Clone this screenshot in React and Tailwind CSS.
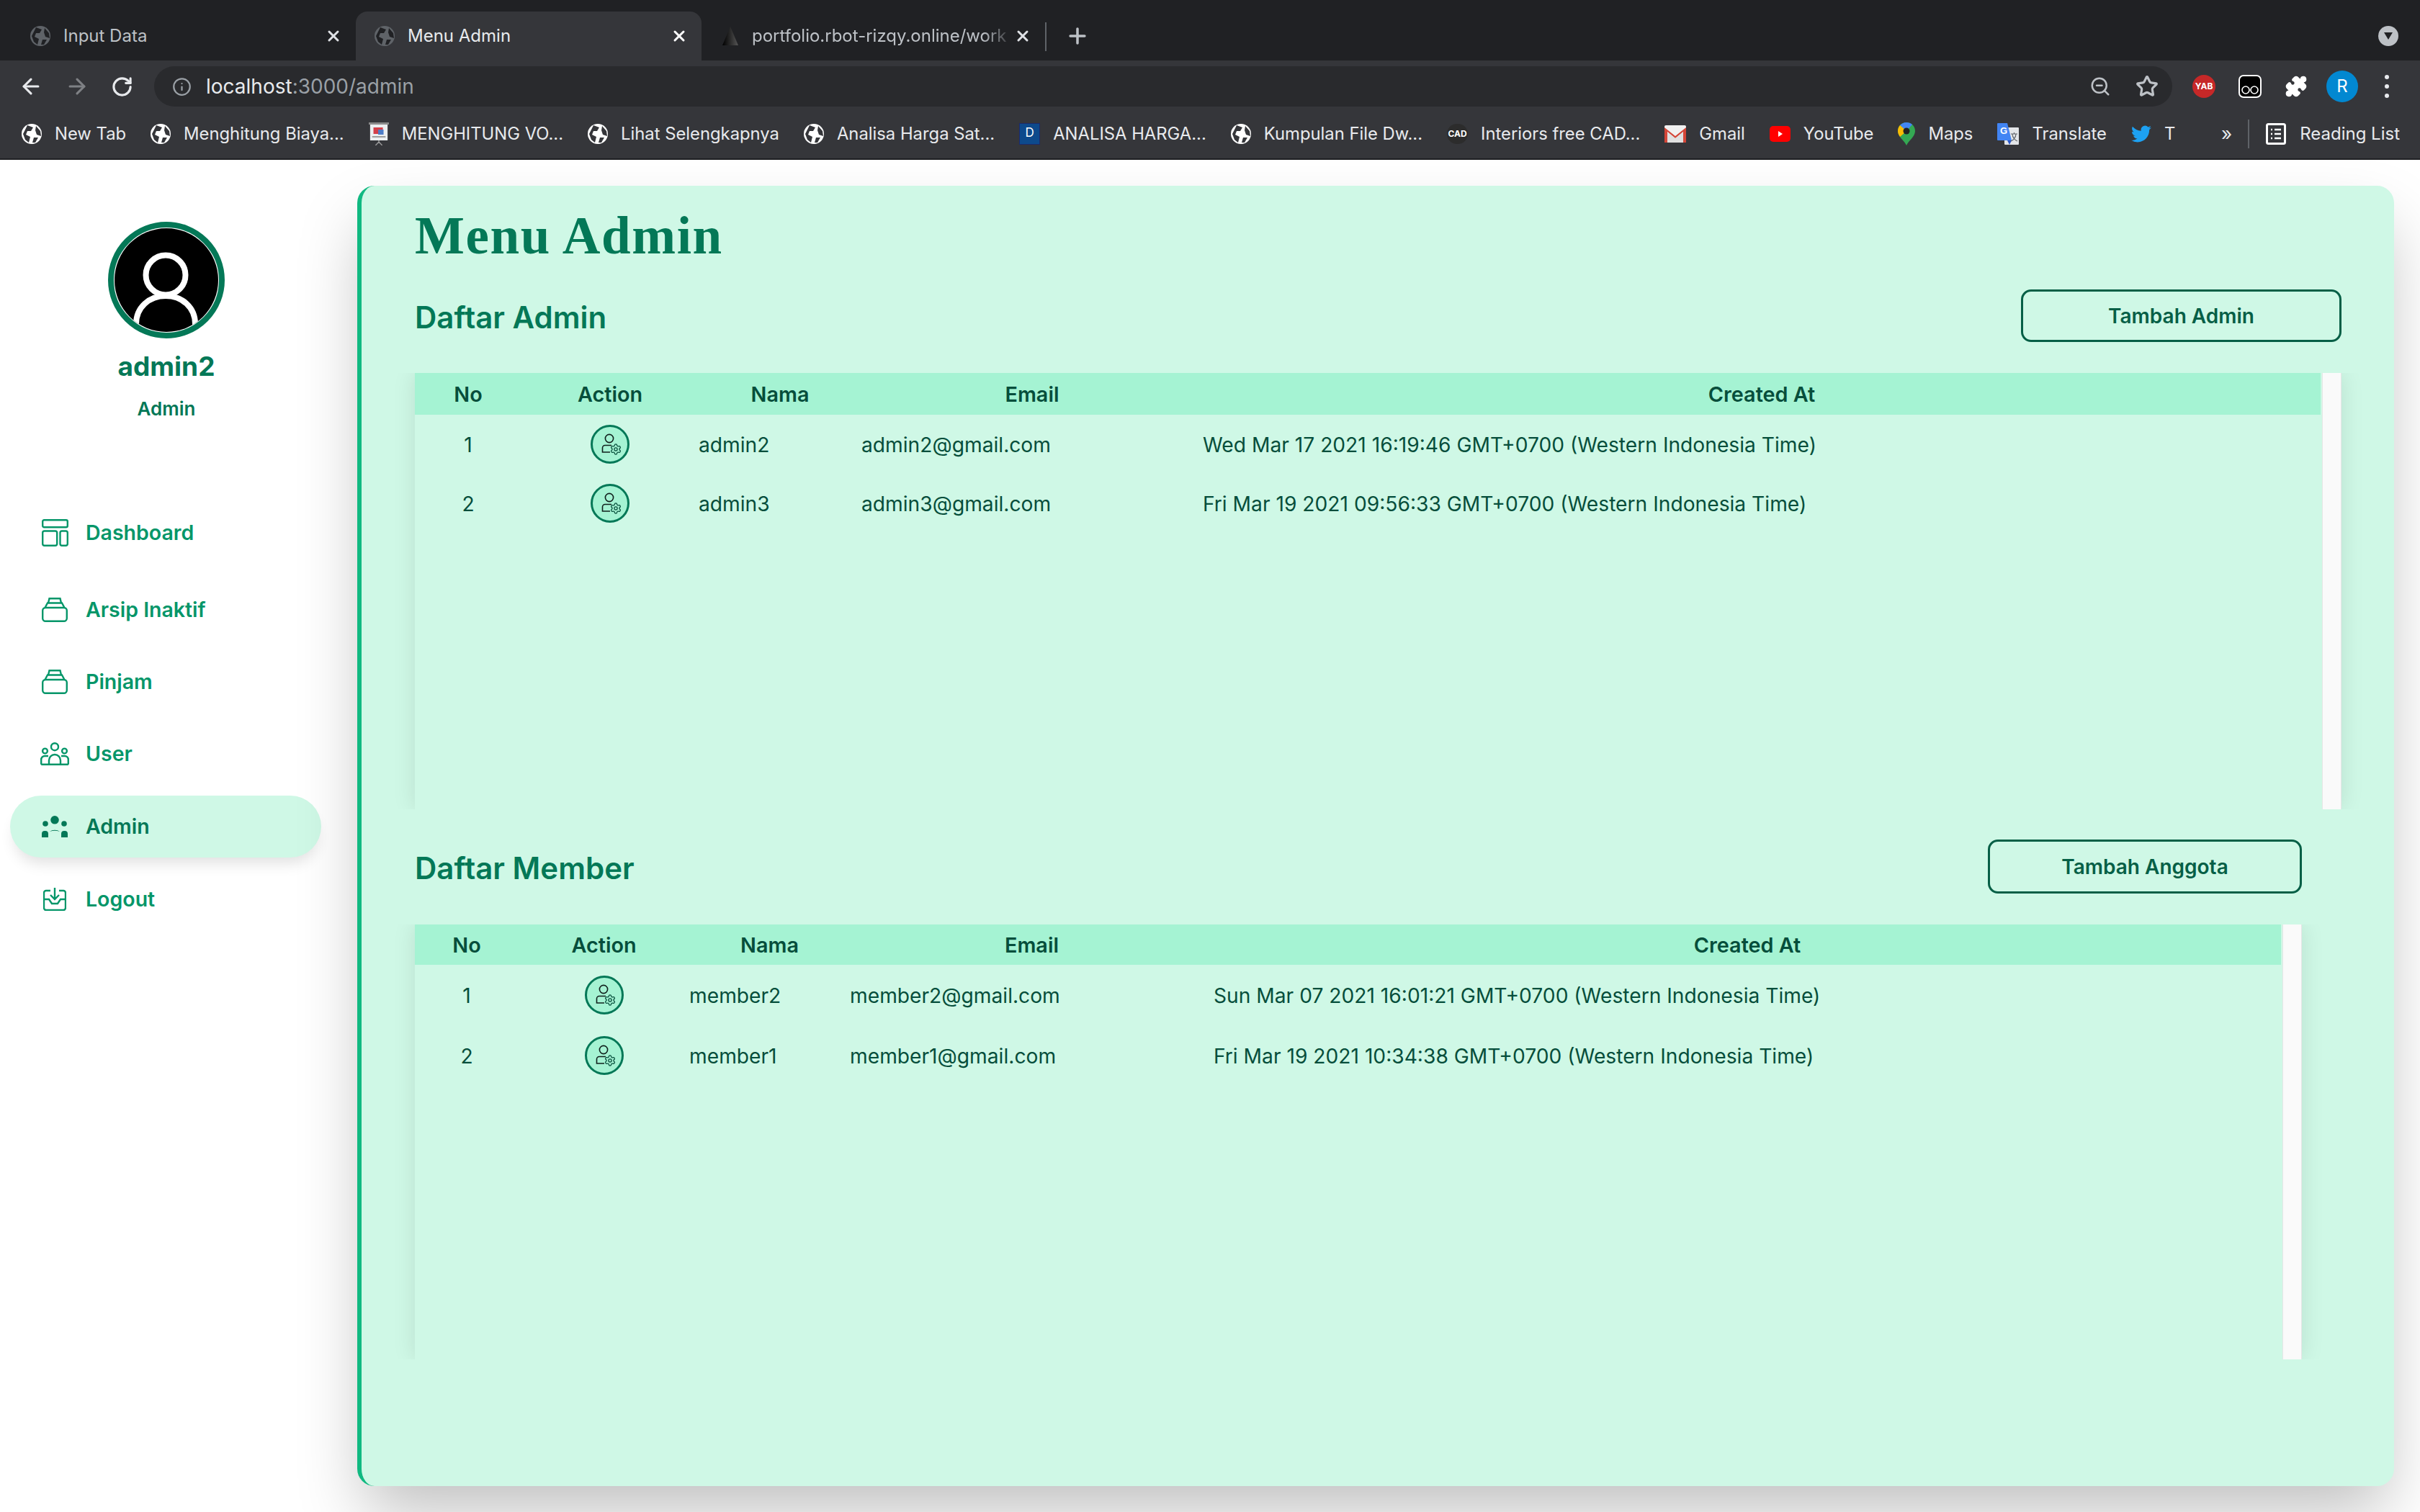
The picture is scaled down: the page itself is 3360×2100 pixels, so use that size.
import { ArrowLeft, ArrowRight, RotateCw, Info, ZoomOut, Star, X, Plus, Settings, Puzzle } from 'lucide-react'

const sans = "font-['Inter','Liberation_Sans',sans-serif]"

function Globe({ dim }) {
  const land = dim ? '#202124' : '#35363a'
  return (
    <svg width="28" height="28" viewBox="0 0 28 28" className="shrink-0">
      <circle cx="14" cy="14" r="14" fill={dim ? '#5f6368' : '#ffffff'} />
      <path d="M8 2 L16 5 L13 10 L8 10 L6 15 L12 18 L10 26 L5 22 L2 14 Z M20 3 L26 10 L27 17 L21 15 L19 9 Z M17 19 L23 19 L19 26 L15 26 Z" fill={land} />
    </svg>
  )
}

function Tab({ width, pad, title, active, faded, icon }) {
  return (
    <div className={`relative flex h-[68px] shrink-0 items-center ${width} ${active ? 'rounded-t-[16px] bg-[#35363a]' : ''}`}>
      <div className={`flex w-full items-center pr-[19px] ${pad}`}>
        {icon}
        <span className={`ml-[18px] min-w-0 flex-1 overflow-hidden whitespace-nowrap text-[24px] ${active ? 'text-[#e8eaed]' : 'text-[#bdc1c6]'} ${faded ? '[mask-image:linear-gradient(90deg,#000_88%,transparent)]' : ''}`}>{title}</span>
        <X size={24} strokeWidth={3} className={active ? 'shrink-0 text-white' : 'shrink-0 text-[#dfe1e5]'} />
      </div>
    </div>
  )
}

function Triangle() {
  return (
    <svg width="24" height="30" viewBox="0 0 24 30" className="shrink-0">
      <defs>
        <linearGradient id="tri" x1="0" x2="1">
          <stop offset="0" stopColor="#000" />
          <stop offset="1" stopColor="#555" />
        </linearGradient>
      </defs>
      <path d="M12 2 L23 28 H1 Z" fill="url(#tri)" />
    </svg>
  )
}

const bookmarks = [
  { label: 'New Tab', icon: <Globe /> },
  { label: 'Menghitung Biaya...', icon: <Globe /> },
  { label: 'MENGHITUNG VO...', icon: <Poster /> },
  { label: 'Lihat Selengkapnya', icon: <Globe /> },
  { label: 'Analisa Harga Sat...', icon: <Globe /> },
  { label: 'ANALISA HARGA...', icon: <DBox /> },
  { label: 'Kumpulan File Dw...', icon: <Globe /> },
  { label: 'Interiors free CAD...', icon: <CadMark /> },
  { label: 'Gmail', icon: <Gmail /> },
  { label: 'YouTube', icon: <YouTube /> },
  { label: 'Maps', icon: <Maps /> },
  { label: 'Translate', icon: <Translate /> },
  { label: 'T', icon: <Twitter /> },
]

function Poster() {
  return (
    <svg width="28" height="32" viewBox="0 0 30 32" className="shrink-0" preserveAspectRatio="none">
      <rect x="0" y="0" width="30" height="3" fill="#8a8a8a" />
      <rect x="2" y="3" width="26" height="22" fill="#eceff1" />
      <rect x="7" y="7" width="14" height="9" fill="#d33f49" />
      <rect x="14" y="10" width="8" height="7" fill="#4d7cc7" />
      <rect x="5" y="19" width="20" height="2" fill="#9e9e9e" />
      <path d="M15 25 L15 29 M15 27 L10 32 M15 27 L20 32" stroke="#999" strokeWidth="1.5" />
    </svg>
  )
}

function DBox() {
  return (
    <div className="flex h-[30px] w-[29px] shrink-0 items-start justify-center border border-[#1b2a6b] bg-[#0d4a8c] text-[17px] leading-[24px] text-white">D</div>
  )
}

function CadMark() {
  return (
    <div className="flex h-[28px] w-[29px] shrink-0 items-center justify-center rounded-full bg-[#2c2c2c] text-[12px] font-bold leading-none text-white">CAD</div>
  )
}

function Gmail() {
  return (
    <svg width="30" height="24" viewBox="0 0 30 24" className="shrink-0">
      <rect width="30" height="24" rx="2" fill="#f1f1f1" />
      <path d="M0 3 L15 15 L30 3 V24 H26 V9 L15 18 L4 9 V24 H0 Z" fill="#d44638" />
      <path d="M4 9 L15 18 L26 9 V24 H4 Z" fill="#e0e0e0" />
    </svg>
  )
}

function YouTube() {
  return (
    <svg width="29" height="22" viewBox="0 0 29 22" className="shrink-0">
      <rect width="29" height="22" rx="5" fill="#ff0000" />
      <path d="M12 7 L18 11 L12 15 Z" fill="#fff" />
    </svg>
  )
}

function Maps() {
  return (
    <svg width="24" height="32" viewBox="0 0 24 32" className="shrink-0">
      <path d="M12 0 C5 0 0 5 0 12 C0 20 9 25 12 32 C15 25 24 20 24 12 C24 5 19 0 12 0 Z" fill="#34a853" />
      <path d="M12 0 C8 0 5 2 3 4 L12 12 L20 3 C18 1 15 0 12 0 Z" fill="#4285f4" />
      <path d="M0 12 C0 15 1 17 3 20 L12 12 L3 4 C1 6 0 9 0 12 Z" fill="#fbbc04" />
      <circle cx="12" cy="12" r="4.5" fill="#222" />
    </svg>
  )
}

function Translate() {
  return (
    <svg width="30" height="30" viewBox="0 0 30 30" className="shrink-0">
      <rect x="10" y="6" width="20" height="24" rx="1" fill="#e3e5e8" />
      <path d="M0 1 a1 1 0 0 1 1 -1 H14 L20 24 H1 a1 1 0 0 1 -1 -1 Z" fill="#4285f4" />
      <path d="M14 24 L20 24 L17 30 Z" fill="#2a56c6" />
      <text x="4" y="15" fontSize="13" fontWeight="700" fill="#fff" fontFamily="Liberation Sans">G</text>
      <path d="M19 15 H28 M23.5 13 V15 M21 15 C21 20 25 24 28 25 M26 15 C26 20 22 24 19 25" stroke="#5f6368" strokeWidth="1.2" fill="none" />
    </svg>
  )
}

function Twitter() {
  return (
    <svg width="28" height="28" viewBox="0 0 24 24" className="shrink-0">
      <path fill="#1da1f2" d="M23.95 4.57a10 10 0 0 1-2.82.77 4.96 4.96 0 0 0 2.16-2.72c-.95.55-2 .95-3.12 1.18a4.92 4.92 0 0 0-8.38 4.48C7.69 8.1 4.07 6.13 1.64 3.16a4.82 4.82 0 0 0-.67 2.48c0 1.71.87 3.21 2.19 4.1a4.9 4.9 0 0 1-2.23-.62v.06a4.92 4.92 0 0 0 3.95 4.83 4.9 4.9 0 0 1-2.21.08 4.93 4.93 0 0 0 4.6 3.42A9.87 9.87 0 0 1 0 19.54a13.94 13.94 0 0 0 7.55 2.21c9.05 0 14-7.5 14-13.98 0-.21 0-.42-.02-.63a9.94 9.94 0 0 0 2.46-2.55z" />
    </svg>
  )
}

function BrowserChrome() {
  return (
    <div className={`shrink-0 ${sans}`}>
      <div className="flex h-[84px] items-end bg-[#202124] pr-[30px]">
        <Tab width="w-[494px]" pad="pl-[42px]" title="Input Data" icon={<Globe dim />} />
        <Tab width="w-[480px]" pad="pl-[26px]" title="Menu Admin" active icon={<Globe dim />} />
        <Tab width="w-[477px]" pad="pl-[28px]" title="portfolio.rbot-rizqy.online/work" faded icon={<Triangle />} />
        <div className="mb-[13px] h-[40px] w-[2px] bg-[#5f6368]" />
        <Plus size={34} strokeWidth={2.5} className="mb-[17px] ml-[26px] text-[#bdc1c6]" />
        <div className="mb-[20px] ml-auto flex h-[28px] w-[28px] items-center justify-center rounded-full bg-[#bdc1c6]">
          <svg width="12" height="10" viewBox="0 0 12 10"><path d="M0 0 H12 L6 10 Z" fill="#202124" /></svg>
        </div>
      </div>
      <div className="flex h-[64px] items-start bg-[#35363a] pt-[8px]">
        <div className="flex h-[56px] w-[214px] items-center gap-[30px] pl-[26px]">
          <ArrowLeft size={34} strokeWidth={2.2} className="text-[#e8eaed]" />
          <ArrowRight size={34} strokeWidth={2.2} className="text-[#7f8185]" />
          <RotateCw size={31} strokeWidth={2.4} className="text-[#e8eaed]" />
        </div>
        <div className="flex h-[56px] w-[802px] flex-1 items-center rounded-full bg-[#292a2d] pl-[25px] pr-[19px]">
          <Info size={27} strokeWidth={2} className="text-[#9aa0a6]" />
          <span className="ml-[20px] text-[28px] leading-none text-[#e8eaed]">localhost<span className="text-[#9aa0a6]">:3000/admin</span></span>
          <ZoomOut size={30} strokeWidth={2} className="ml-auto text-[#bdc1c6]" />
          <Star size={32} strokeWidth={2.4} className="ml-[34px] text-[#bdc1c6]" />
        </div>
        <div className="flex h-[56px] w-[344px] shrink-0 items-center pl-[28px]">
          <div className="flex h-[32px] w-[32px] items-center justify-center rounded-full bg-[#c62828] text-[12px] font-bold leading-none text-white">YAB</div>
          <svg width="32" height="32" viewBox="0 0 32 32" className="ml-[32px]">
            <rect x="1" y="1" width="30" height="30" rx="6" fill="#000" stroke="#fff" strokeWidth="2" />
            <circle cx="10" cy="21" r="5" fill="none" stroke="#fff" strokeWidth="1.6" />
            <circle cx="22" cy="21" r="5" fill="none" stroke="#fff" strokeWidth="1.6" />
          </svg>
          <Puzzle size={32} fill="#ffffff" strokeWidth={1.5} className="ml-[32px] text-white" />
          <div className="ml-[26px] flex h-[44px] w-[44px] items-center justify-center rounded-full bg-[#0288d1] text-[24px] text-white">R</div>
          <div className="ml-[37px] flex flex-col gap-[7px]">
            <div className="h-[6px] w-[6px] rounded-full bg-[#e8eaed]" />
            <div className="h-[6px] w-[6px] rounded-full bg-[#e8eaed]" />
            <div className="h-[6px] w-[6px] rounded-full bg-[#e8eaed]" />
          </div>
        </div>
      </div>
      <div className="flex h-[74px] items-center border-b-2 border-[#202124] bg-[#35363a] pl-[30px] pr-[28px] pt-[4px]">
        <div className="flex items-center gap-[34px]">
          {bookmarks.map((b) => (
            <div key={b.label} className="flex items-center gap-[18px]">
              {b.icon}
              <span className="whitespace-nowrap text-[23.8px] leading-none text-[#e8eaed]">{b.label}</span>
            </div>
          ))}
        </div>
        <span className="ml-auto text-[26px] leading-none text-[#e8eaed]">»</span>
        <div className="ml-[22px] h-[40px] w-[2px] bg-[#5f6368]" />
        <svg width="28" height="30" viewBox="0 0 28 30" className="ml-[23px]">
          <rect x="1.5" y="1.5" width="25" height="27" rx="2" fill="none" stroke="#fff" strokeWidth="3" />
          <path d="M7 9 H9 M12 9 H21 M7 15 H9 M12 15 H21 M7 21 H9 M12 21 H21" stroke="#fff" strokeWidth="2.5" />
        </svg>
        <span className="ml-[19px] whitespace-nowrap text-[24px] leading-none text-[#e8eaed]">Reading List</span>
      </div>
    </div>
  )
}

function IconDashboard() {
  return (
    <svg width="37" height="38" viewBox="0 0 37 38" fill="none" stroke="currentColor" strokeWidth="2.4">
      <rect x="1.2" y="1.2" width="34.6" height="10" rx="2" />
      <rect x="1.2" y="16.5" width="20" height="20.3" rx="2.5" />
      <rect x="25.5" y="16.5" width="10.3" height="20.3" rx="2.5" />
    </svg>
  )
}

function IconArchive() {
  return (
    <svg width="36" height="34" viewBox="0 0 36 34" fill="none" stroke="currentColor" strokeWidth="2.4">
      <rect x="1.2" y="14" width="33.6" height="18.8" rx="4" />
      <path d="M4.5 14 L8 7.5 H28 L31.5 14" />
      <path d="M9 7.5 L10.5 1.2 H25.5 L27 7.5" />
    </svg>
  )
}

function IconUsers() {
  return (
    <svg width="40" height="32" viewBox="0 0 40 32" fill="none" stroke="currentColor" strokeWidth="2.4">
      <circle cx="20" cy="6.2" r="5" />
      <circle cx="6.5" cy="12" r="3.4" />
      <circle cx="33.5" cy="12" r="3.4" />
      <path d="M1.2 30.8 V24 a5 5 0 0 1 5 -5 H11 M38.8 30.8 V24 a5 5 0 0 0 -5 -5 H29" />
      <path d="M12 30.8 V25 a8 8 0 0 1 16 0 V30.8" />
      <path d="M1.2 30.8 H38.8" />
    </svg>
  )
}

function IconAdmin() {
  return (
    <svg width="36" height="30" viewBox="0 0 36 30" fill="currentColor">
      <circle cx="18" cy="5.8" r="5.8" />
      <circle cx="5" cy="11" r="3.8" />
      <circle cx="31" cy="11" r="3.8" />
      <path d="M0 30 V25 a4 4 0 0 1 4 -4 H5 a4 4 0 0 1 4 4 V30 Z M27 30 V25 a4 4 0 0 1 4 -4 H32 a4 4 0 0 1 4 4 V30 Z" />
      <path d="M11 22 a9 6 0 0 1 14 0 q-7 -2.4 -14 0 Z" />
    </svg>
  )
}

function IconLogout() {
  return (
    <svg width="32" height="32" viewBox="0 0 32 32" fill="none" stroke="currentColor" strokeWidth="2.4">
      <path d="M10 4 H4 a3 3 0 0 0 -3 3 V28 a3 3 0 0 0 3 3 H28 a3 3 0 0 0 3 -3 V7 a3 3 0 0 0 -3 -3 H22" />
      <path d="M16 0 V15 M10 10 L16 16 L22 10" />
      <path d="M1 16 H8 L12 22 H20 L24 16 H31" />
    </svg>
  )
}

const navItems = [
  { label: 'Dashboard', icon: <IconDashboard />, gap: 'mt-[0px]' },
  { label: 'Arsip Inaktif', icon: <IconArchive />, gap: 'mt-[21px]' },
  { label: 'Pinjam', icon: <IconArchive />, gap: 'mt-[14px]' },
  { label: 'User', icon: <IconUsers />, gap: 'mt-[14px]' },
  { label: 'Admin', icon: <IconAdmin />, gap: 'mt-[15px]', active: true },
  { label: 'Logout', icon: <IconLogout />, gap: 'mt-[15px]' },
]

function Sidebar() {
  return (
    <aside className="flex w-[496px] shrink-0 flex-col">
      <div className="flex w-[462px] flex-col items-center pt-[86px]">
        <div className="h-[162px] w-[162px] overflow-hidden rounded-full border-[8px] border-[#047857] bg-white p-[1px]">
          <svg viewBox="0 0 144 144" className="h-full w-full">
            <circle cx="72" cy="72" r="72" fill="#000" />
            <clipPath id="avatar"><circle cx="72" cy="72" r="72" /></clipPath>
            <g clipPath="url(#avatar)" fill="none" stroke="#fff" strokeWidth="8">
              <circle cx="71" cy="65" r="27.5" />
              <path d="M30 150 V133 C30 110 48 94 71 94 C94 94 112 110 112 133 V150" />
            </g>
          </svg>
        </div>
        <div className="mt-[14px] text-[37px] font-bold leading-[50px] text-[#047857]">admin2</div>
        <div className="mt-[18px] text-[26px] font-semibold leading-[32px] text-[#047857]">Admin</div>
      </div>
      <nav className="ml-[14px] mt-[113px] flex w-[432px] flex-col self-start">
        {navItems.map((n) => (
          <div
            key={n.label}
            className={`flex h-[86px] items-center rounded-full pl-[42px] ${n.gap} ${n.active ? 'bg-[#cff8e6] text-[#047857] shadow-[0_14px_20px_-6px_rgba(0,0,0,0.12)]' : 'text-[#059669]'}`}
          >
            <div className="flex w-[40px] justify-center">{n.icon}</div>
            <span className="ml-[23px] text-[28.5px] font-semibold leading-none">{n.label}</span>
          </div>
        ))}
      </nav>
    </aside>
  )
}

function ActionButton() {
  return (
    <div className="mx-auto h-[54px] w-[54px] rounded-full border-[3px] border-[#047857] bg-[#a5f3d3]">
      <svg width="48" height="48" viewBox="3 3 48 48" fill="none" stroke="#10201c" strokeWidth="1.6">
        <circle cx="26" cy="19" r="5.6" />
        <path d="M29 28.5 H20 a3.5 3.5 0 0 0 -3.5 3.5 V38 H27" />
        <Settings x="26.5" y="25.5" width="17" height="17" strokeWidth="1.8" />
      </svg>
    </div>
  )
}

function DataTable({ widths, rows, headHeight, rowHeight, scrollHeight, width }) {
  return (
    <div className={`flex ${scrollHeight} ${width} shadow-[0_0_30px_rgba(0,0,0,0.1)] [clip-path:inset(0_-30px)]`}>
      <div className="min-w-0 flex-1 bg-[#cff8e6]">
        <table className="w-full table-fixed border-collapse text-[#064e3b]">
          <colgroup>
            {widths.map((w) => <col key={w} className={w} />)}
          </colgroup>
          <thead>
            <tr className={`${headHeight} bg-[#a5f3d3] text-[28.8px]`}>
              <th className="pt-[2px] font-semibold">No</th>
              <th className="pt-[2px] font-semibold">Action</th>
              <th className="pt-[2px] font-semibold">Nama</th>
              <th className="pt-[2px] font-semibold">Email</th>
              <th className="pt-[2px] font-semibold">Created At</th>
            </tr>
          </thead>
          <tbody className="text-[28.2px]">
            {rows.map((r) => (
              <tr key={r[0]} className={rowHeight}>
                <td className="pt-[2px] text-center">{r[0]}</td>
                <td><ActionButton /></td>
                <td className="pt-[2px]">{r[1]}</td>
                <td className="pt-[2px]">{r[2]}</td>
                <td className="pt-[2px]">{r[3]}</td>
              </tr>
            ))}
          </tbody>
        </table>
      </div>
      <div className="ml-[2px] w-[27px] shrink-0 border-x border-[#e6e6e6] bg-[#fafafa]" />
    </div>
  )
}

function SectionHead({ title, button, buttonClass, width }) {
  return (
    <div className={`flex items-center justify-between ${width}`}>
      <h2 className="pt-[4px] text-[42px] font-semibold leading-none text-[#047857]">{title}</h2>
      <button className={`rounded-[14px] border-[3px] border-[#065f46] text-[28px] font-semibold text-[#065f46] ${buttonClass}`}>{button}</button>
    </div>
  )
}

export default function App() {
  return (
    <div className={`flex h-[2100px] w-[3360px] flex-col overflow-hidden bg-white ${sans}`}>
      <BrowserChrome />
      <div className="flex flex-1">
        <Sidebar />
        <main className="mt-[36px] h-[1806px] w-[2828px] rounded-[24px] border-l-[6px] border-[#10b981] bg-[#cff8e6] pl-[74px] pt-[34px] shadow-[0_45px_90px_-10px_rgba(0,0,0,0.25)]">
          <h1 className="font-['Liberation_Serif',serif] text-[73px] font-bold leading-[72px] tracking-[1.6px] text-[#047857]">Menu Admin</h1>
          <div className="mt-[38px]">
            <SectionHead title="Daftar Admin" button="Tambah Admin" buttonClass="h-[73px] w-[445px]" width="w-[2675px]" />
          </div>
          <div className="mt-[43px]">
            <DataTable
              width="w-[2675px]"
              scrollHeight="h-[606px]"
              headHeight="h-[58px]"
              rowHeight="h-[82px]"
              widths={['w-[148px]', 'w-[246px]', 'w-[226px]', 'w-[474px]', 'w-auto']}
              rows={[
                ['1', 'admin2', 'admin2@gmail.com', 'Wed Mar 17 2021 16:19:46 GMT+0700 (Western Indonesia Time)'],
                ['2', 'admin3', 'admin3@gmail.com', 'Fri Mar 19 2021 09:56:33 GMT+0700 (Western Indonesia Time)'],
              ]}
            />
          </div>
          <div className="mt-[42px]">
            <SectionHead title="Daftar Member" button="Tambah Anggota" buttonClass="h-[75px] w-[436px]" width="w-[2620px]" />
          </div>
          <div className="mt-[43px]">
            <DataTable
              width="w-[2620px]"
              scrollHeight="h-[604px]"
              headHeight="h-[56px]"
              rowHeight="h-[84px]"
              widths={['w-[144px]', 'w-[237px]', 'w-[223px]', 'w-[505px]', 'w-auto']}
              rows={[
                ['1', 'member2', 'member2@gmail.com', 'Sun Mar 07 2021 16:01:21 GMT+0700 (Western Indonesia Time)'],
                ['2', 'member1', 'member1@gmail.com', 'Fri Mar 19 2021 10:34:38 GMT+0700 (Western Indonesia Time)'],
              ]}
            />
          </div>
        </main>
      </div>
    </div>
  )
}
